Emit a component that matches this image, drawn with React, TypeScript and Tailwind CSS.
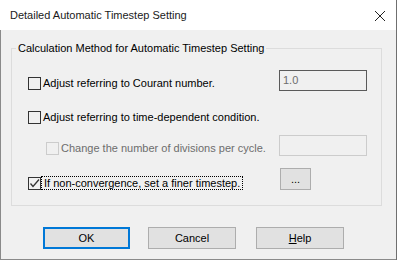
function CheckBox({ checked = false, disabled = false }: { checked?: boolean; disabled?: boolean }) {
  return (
    <span
      className={
        "relative w-[13px] h-[13px] shrink-0 border " +
        (disabled ? "border-[#cccccc]" : "border-[#333333]")
      }
    >
      {checked && (
        <svg className="absolute left-[0px] top-[0px]" width="11" height="11" viewBox="0 0 11 11">
          <path d="M1.5 5.5 L4 8.5 L10 1.5" fill="none" stroke="#333333" strokeWidth="1.3" />
        </svg>
      )}
    </span>
  )
}

function Btn({ label, focused = false, w = "w-[88px]" }: { label: React.ReactNode; focused?: boolean; w?: string }) {
  return (
    <button
      className={
        "h-[22px] bg-[#e1e1e1] text-[11px] text-black leading-none flex items-center justify-center " +
        w +
        (focused ? " border-2 border-[#0078d7]" : " border border-[#adadad]")
      }
    >
      {label}
    </button>
  )
}

export default function App() {
  return (
    <div
      className="w-[397px] h-[260px] flex flex-col border-r border-[#6f6f6f] text-black text-[11px] whitespace-nowrap"
      style={{ fontFamily: '"Liberation Sans", Arial, sans-serif' }}
    >
      <div className="h-[30px] bg-white flex items-center justify-between pl-[10px] pr-[10px] shrink-0">
        <span className="text-[11px] text-[#1a1a1a]">Detailed Automatic Timestep Setting</span>
        <svg width="12" height="12" viewBox="0 0 12 12" className="mt-[2px]">
          <path d="M1 1 L11 11 M11 1 L1 11" stroke="#222" strokeWidth="1" />
        </svg>
      </div>

      <div className="flex-1 bg-[#f0f0f0] border-l border-b border-[#8a8a8a] flex flex-col">
        <fieldset className="ml-[10px] mt-[10px] w-[371px] h-[166px] border border-[#dcdcdc] pl-[16px]">
          <legend className="ml-[-12px] px-[2px] text-[11px] leading-[16px]">
            Calculation Method for Automatic Timestep Setting
          </legend>

          <div className="mt-[14px] h-[20px] flex items-start">
            <div className="flex items-center gap-[2px] mt-[7px] w-[251px]">
              <CheckBox />
              <span className="leading-[13px]">Adjust referring to Courant number.</span>
            </div>
            <div className="w-[88px] h-[21px] border border-[#5a5a5a] text-[#6d6d6d] pl-[3px] leading-[19px]">1.0</div>
          </div>

          <div className="mt-[21px] flex items-center gap-[2px]">
            <CheckBox />
            <span className="leading-[13px]">Adjust referring to time-dependent condition.</span>
          </div>

          <div className="mt-[11px] h-[21px] flex items-start">
            <div className="flex items-center gap-[2px] mt-[7px] w-[251px] pl-[18px]">
              <CheckBox disabled />
              <span className="leading-[13px] text-[#6d6d6d]">Change the number of divisions per cycle.</span>
            </div>
            <div className="w-[88px] h-[21px] border border-[#cccccc]" />
          </div>

          <div className="mt-[12px] h-[21px] flex items-start">
            <div className="flex items-center mt-[8px] w-[252px]">
              <CheckBox checked />
              <span className="leading-[12px] border border-dotted border-black px-[2px]">
                If non-convergence, set a finer timestep.
              </span>
            </div>
            <Btn label="..." w="w-[31px]" />
          </div>
        </fieldset>

        <div className="mt-[21px] flex pl-[42px]">
          <Btn label="OK" focused w="w-[87px]" />
          <div className="ml-[18px]">
            <Btn label="Cancel" />
          </div>
          <div className="ml-[20px]">
            <Btn
              label={
                <span>
                  <span className="underline">H</span>elp
                </span>
              }
            />
          </div>
        </div>
      </div>
    </div>
  )
}
